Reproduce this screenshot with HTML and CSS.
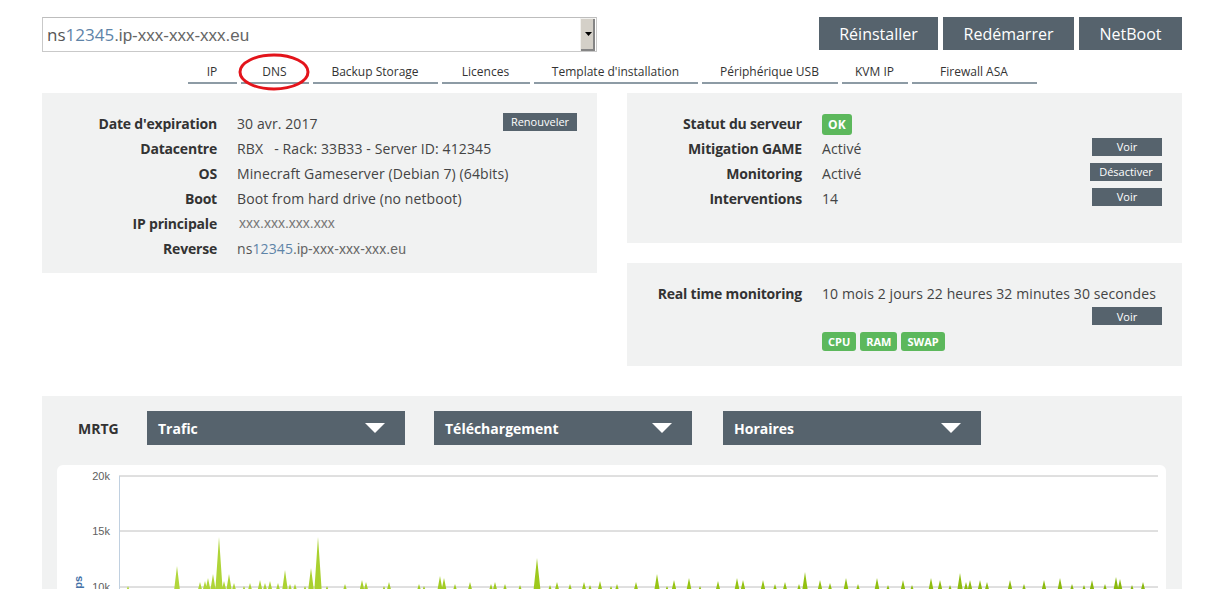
FILE: index.html
```html
<!DOCTYPE html>
<html lang="fr">
<head>
<meta charset="utf-8">
<title>Serveur</title>
<link rel="stylesheet" href="styles.css">
</head>
<body>
<div class="page">
  <div class="top">
    <div class="select">
      <span class="sel-text"><span class="ns">ns</span><span class="num">12345</span><span class="host">.ip-xxx-xxx-xxx.eu</span></span>
      <span class="sel-btn"><svg width="7" height="4" viewBox="0 0 7 4"><path d="M0 0H7L3.5 4Z" fill="#000"/></svg></span>
    </div>
    <div class="actions">
      <button class="act a-re">Réinstaller</button>
      <button class="act a-rd">Redémarrer</button>
      <button class="act a-nb">NetBoot</button>
    </div>
  </div>

  <nav class="tabs">
    <a class="tab t-ip">IP</a>
    <a class="tab t-dns">DNS<svg class="circle" width="74" height="40" viewBox="0 0 74 40"><ellipse cx="37" cy="20" rx="34" ry="17" fill="none" stroke="#e3141b" stroke-width="3"/></svg></a>
    <a class="tab t-bk">Backup Storage</a>
    <a class="tab t-lic">Licences</a>
    <a class="tab t-tpl">Template d'installation</a>
    <a class="tab t-usb">Périphérique USB</a>
    <a class="tab t-kvm">KVM IP</a>
    <a class="tab t-fw">Firewall ASA</a>
  </nav>

  <div class="panels">
    <section class="panel info">
      <div class="row"><span class="lbl">Date d'expiration</span><span class="val">30 avr. 2017</span><button class="sm renew">Renouveler</button></div>
      <div class="row"><span class="lbl">Datacentre</span><span class="val">RBX &nbsp; - Rack: 33B33 - Server ID: 412345</span></div>
      <div class="row"><span class="lbl">OS</span><span class="val">Minecraft Gameserver (Debian 7) (64bits)</span></div>
      <div class="row"><span class="lbl">Boot</span><span class="val">Boot from hard drive (no netboot)</span></div>
      <div class="row"><span class="lbl">IP principale</span><span class="val ip">xxx.xxx.xxx.xxx</span></div>
      <div class="row"><span class="lbl">Reverse</span><span class="val"><span class="ns">ns</span><span class="num">12345</span><span class="host">.ip-xxx-xxx-xxx.eu</span></span></div>
    </section>

    <div class="right-col">
      <section class="panel status">
        <div class="row"><span class="lbl">Statut du serveur</span><span class="val"><span class="badge ok">OK</span></span></div>
        <div class="row"><span class="lbl">Mitigation GAME</span><span class="val">Activé</span><button class="sm voir">Voir</button></div>
        <div class="row"><span class="lbl">Monitoring</span><span class="val">Activé</span><button class="sm desact">Désactiver</button></div>
        <div class="row"><span class="lbl">Interventions</span><span class="val">14</span><button class="sm voir">Voir</button></div>
      </section>
      <section class="panel rtm">
        <div class="row"><span class="lbl wide">Real time monitoring</span><span class="val">10 mois 2 jours 22 heures 32 minutes 30 secondes</span></div>
        <div class="rtm-btn"><button class="sm voir">Voir</button></div>
        <div class="badges"><span class="badge">CPU</span><span class="badge">RAM</span><span class="badge">SWAP</span></div>
      </section>
    </div>
  </div>

  <section class="panel mrtg">
    <div class="mrtg-head">
      <span class="mrtg-lbl">MRTG</span>
      <div class="dd"><span>Trafic</span><svg width="20" height="10" viewBox="0 0 20 10"><path d="M0 0H20L10 10Z" fill="#fff"/></svg></div>
      <div class="dd"><span>Téléchargement</span><svg width="20" height="10" viewBox="0 0 20 10"><path d="M0 0H20L10 10Z" fill="#fff"/></svg></div>
      <div class="dd"><span>Horaires</span><svg width="20" height="10" viewBox="0 0 20 10"><path d="M0 0H20L10 10Z" fill="#fff"/></svg></div>
    </div>
    <div class="chart">
      <svg class="plot" width="1109" height="300" viewBox="0 0 1109 300">
        <defs>
          <linearGradient id="sp" x1="0" y1="0" x2="1" y2="0">
            <stop offset="0" stop-color="#b4d840"/>
            <stop offset="0.5" stop-color="#98c514"/>
            <stop offset="1" stop-color="#89b80c"/>
          </linearGradient>
        </defs>
        <line x1="62" y1="11" x2="1101" y2="11" stroke="#c0c0c0" stroke-width="1"/>
        <line x1="62" y1="66" x2="1101" y2="66" stroke="#c0c0c0" stroke-width="1"/>
        <line x1="62" y1="122" x2="1101" y2="122" stroke="#c0c0c0" stroke-width="1"/>
        <line x1="62.5" y1="11" x2="62.5" y2="300" stroke="#c0d0e0" stroke-width="1"/>
        <text class="ax" x="53" y="15" text-anchor="end">20k</text>
        <text class="ax" x="53" y="70" text-anchor="end">15k</text>
        <text class="ax" x="53" y="126" text-anchor="end">10k</text>
        <text class="axt" transform="translate(25,111) rotate(-90)" text-anchor="end">bps</text>
        <path fill="url(#sp)" d="
M67.5 130L71 121L74.5 130Z M116.5 130L120 101L123.5 130Z M139.5 130L143 117L146.5 130Z M144.5 130L148 116L151.5 130Z
M147.5 130L151 113L154.5 130Z M152.5 130L156 109L159.5 130Z M158 130L162 72L166 130Z M163.5 130L167 116L170.5 130Z
M168.5 130L172 109L175.5 130Z M173.5 130L177 118L180.5 130Z M183.5 130L187 121L190.5 130Z M189.5 130L193 118L196.5 130Z
M199.5 130L203 115L206.5 130Z M204.5 130L208 118L211.5 130Z M209.5 130L213 116L216.5 130Z M217.5 130L221 118L224.5 130Z
M224.5 130L228 105L231.5 130Z M229.5 130L233 119L236.5 130Z M234.5 130L238 119L241.5 130Z M244.5 130L248 121L251.5 130Z
M250.5 130L254 103L257.5 130Z M257 130L261 72L265 130Z M266.5 130L270 121L273.5 130Z M284.5 130L288 119L291.5 130Z
M301.5 130L305 115L308.5 130Z M305.5 130L309 117L312.5 130Z M323.5 130L327 121L330.5 130Z M328.5 130L332 117L335.5 130Z
M358.5 130L362 119L365.5 130Z M363.5 130L367 121L370.5 130Z M379.5 130L383 111L386.5 130Z M383.5 130L387 113L390.5 130Z
M394.5 130L398 119L401.5 130Z M409.5 130L413 117L416.5 130Z M430.5 130L434 119L437.5 130Z M434.5 130L438 117L441.5 130Z
M444.5 130L448 119L451.5 130Z M459.5 130L463 120L466.5 130Z M476 130L480 93L484 130Z M489.5 130L493 120L496.5 130Z
M496.5 130L500 117L503.5 130Z M509.5 130L513 119L516.5 130Z M523.5 130L527 117L530.5 130Z M529.5 130L533 120L536.5 130Z
M539.5 130L543 116L546.5 130Z M550.5 130L554 121L557.5 130Z M556.5 130L560 119L563.5 130Z M575.5 130L579 117L582.5 130Z
M596.5 130L600 109L603.5 130Z M606.5 130L610 121L613.5 130Z M613.5 130L617 115L620.5 130Z M628.5 130L632 113L635.5 130Z
M639.5 130L643 121L646.5 130Z M657.5 130L661 116L664.5 130Z M676.5 130L680 113L683.5 130Z M682.5 130L686 115L689.5 130Z
M702.5 130L706 115L709.5 130Z M714.5 130L718 119L721.5 130Z M724.5 130L728 117L731.5 130Z M738.5 130L742 119L745.5 130Z
M744.5 130L748 107L751.5 130Z M759.5 130L763 115L766.5 130Z M769.5 130L773 118L776.5 130Z M785.5 130L789 113L792.5 130Z
M797.5 130L801 119L804.5 130Z M816.5 130L820 113L823.5 130Z M827.5 130L831 120L834.5 130Z M842.5 130L846 115L849.5 130Z
M851.5 130L855 120L858.5 130Z M870.5 130L874 113L877.5 130Z M879.5 130L883 115L886.5 130Z M889.5 130L893 120L896.5 130Z
M899.5 130L903 108L906.5 130Z M905.5 130L909 117L912.5 130Z M909.5 130L913 115L916.5 130Z M919.5 130L923 115L926.5 130Z
M926.5 130L930 117L933.5 130Z M949.5 130L953 115L956.5 130Z M963.5 130L967 119L970.5 130Z M983.5 130L987 115L990.5 130Z
M999.5 130L1003 113L1006.5 130Z M1011.5 130L1015 119L1018.5 130Z M1023.5 130L1027 120L1030.5 130Z M1031.5 130L1035 115L1038.5 130Z
M1044.5 130L1048 119L1051.5 130Z M1055.5 130L1059 112L1062.5 130Z M1059.5 130L1063 114L1066.5 130Z M1071.5 130L1075 120L1078.5 130Z
M1082.5 130L1086 117L1089.5 130Z"/>
      </svg>
    </div>
  </section>
</div>
</body>
</html>
```

FILE: styles.css
```css
* { box-sizing: border-box; }

body {
  margin: 0;
  background: #fff;
  font-family: "Open Sans", "Noto Sans", sans-serif;
  color: #333;
}

.page {
  width: 1140px;
  margin-left: 42px;
  padding-top: 17px;
}

/* top bar */
.top {
  display: flex;
  justify-content: space-between;
  align-items: flex-start;
}

.select {
  width: 555px;
  height: 35px;
  border: 1px solid #c9c9c9;
  border-top-color: #bdbdbd;
  display: flex;
  align-items: stretch;
  background: #fff;
}

.sel-text {
  flex: 1;
  padding-left: 4px;
  font-size: 17px;
  line-height: 33px;
  color: #555;
  white-space: nowrap;
}

.ns { font-family: "Open Sans", sans-serif; color: #555; }
.num { font-family: "Open Sans", sans-serif; color: #5e84a8; }
.host { font-family: "Liberation Sans", Arial, sans-serif; color: #666; }

.sel-btn {
  width: 15px;
  margin-right: 1px;
  background: #d4d0c8;
  border-top: 1px solid #f2f1ee;
  border-left: 1px solid #f2f1ee;
  box-shadow: inset -2px -2px 0 #858585;
  display: flex;
  align-items: center;
  justify-content: center;
  padding-bottom: 2px;
}

.actions {
  display: flex;
  gap: 5px;
}

.act {
  height: 33px;
  border: 0;
  background: #56636d;
  color: #fff;
  font-family: "Open Sans", sans-serif;
  font-size: 16px;
  padding: 0;
  cursor: pointer;
}

.a-re { width: 119px; }
.a-rd { width: 131px; }
.a-nb { width: 103px; }

/* tabs */
.tabs {
  display: flex;
  justify-content: center;
  gap: 4px;
  margin-top: 10px;
}

.tab {
  position: relative;
  font-size: 12px;
  line-height: 16px;
  padding-top: 2px;
  padding-bottom: 2px;
  border-bottom: 2px solid #8d9ba5;
  color: #333;
  text-align: center;
  white-space: nowrap;
}

.t-ip { width: 49px; }
.t-dns { width: 68px; }
.t-bk { width: 125px; }
.t-lic { width: 88px; }
.t-tpl { width: 164px; }
.t-usb { width: 136px; }
.t-kvm { width: 66px; }
.t-fw { width: 125px; }

.circle {
  position: absolute;
  left: -4px;
  top: -10px;
}

/* panels */
.panels {
  display: grid;
  grid-template-columns: 555px 555px;
  column-gap: 30px;
  margin-top: 9px;
}

.panel {
  background: #f1f2f2;
}

.info {
  align-self: start;
  padding: 17.5px 20px 12.5px 20px;
}

.right-col {
  display: flex;
  flex-direction: column;
  gap: 20px;
}

.status {
  padding: 17.5px 20px 32.5px 20px;
}

.rtm {
  padding: 17.5px 20px 15px 20px;
}

.row {
  display: flex;
  align-items: center;
  height: 25px;
  font-size: 14px;
}

.lbl {
  width: 155px;
  flex: none;
  margin-right: 20px;
  text-align: right;
  font-weight: 700;
  color: #333;
  white-space: nowrap;
  letter-spacing: -0.2px;
}

.val {
  flex: 1;
  color: #444;
  white-space: nowrap;
  letter-spacing: 0.1px;
}

.val.ip {
  font-family: "Liberation Sans", Arial, sans-serif;
  font-size: 14px;
  color: #777;
  padding-left: 2px;
  letter-spacing: 0;
}

.sm {
  height: 18px;
  border: 0;
  background: #56636d;
  color: #fff;
  font-family: "Open Sans", sans-serif;
  font-size: 11px;
  padding: 0;
  flex: none;
}

.renew { width: 74px; margin-bottom: 3px; }
.voir { width: 70px; margin-bottom: 3px; }
.desact { width: 72px; margin-bottom: 3px; }

.badge {
  display: inline-block;
  background: #5cb85c;
  color: #fff;
  font-weight: 700;
  font-size: 11px;
  line-height: 19px;
  height: 19px;
  padding: 0 6px;
  border-radius: 3px;
}

.badge.ok {
  font-size: 12px;
  line-height: 21px;
  height: 21px;
  padding: 0 6px;
  margin-top: 3px;
}

.rtm-btn {
  display: flex;
  justify-content: flex-end;
  margin-top: 1.5px;
}

.rtm-btn .voir { margin-bottom: 0; }

.badges {
  display: flex;
  gap: 4px;
  margin-top: 7px;
  padding-left: 175px;
}

/* MRTG */
.mrtg {
  margin-top: 30px;
  padding: 15px 16px 20px 15px;
}

.mrtg-head {
  display: flex;
  align-items: center;
  gap: 29px;
}

.mrtg-lbl {
  width: 60px;
  padding-left: 21px;
  font-weight: 700;
  font-size: 14px;
  color: #333;
  box-sizing: content-box;
  margin-right: -20px;
}

.dd {
  width: 258px;
  height: 34px;
  background: #56636d;
  color: #fff;
  font-weight: 700;
  font-size: 14px;
  display: flex;
  align-items: center;
  justify-content: space-between;
  padding: 0 20px 0 11px;
}

.dd + .dd + .dd { margin-left: 2px; }

.chart {
  margin-top: 20px;
  background: #fff;
  border-radius: 6px;
  height: 300px;
}

.plot { display: block; }

.ax {
  font-family: "Liberation Sans", Arial, sans-serif;
  font-size: 11px;
  fill: #606060;
}

.axt {
  font-family: "Liberation Sans", Arial, sans-serif;
  font-size: 11px;
  font-weight: 700;
  fill: #4572a7;
}
```
